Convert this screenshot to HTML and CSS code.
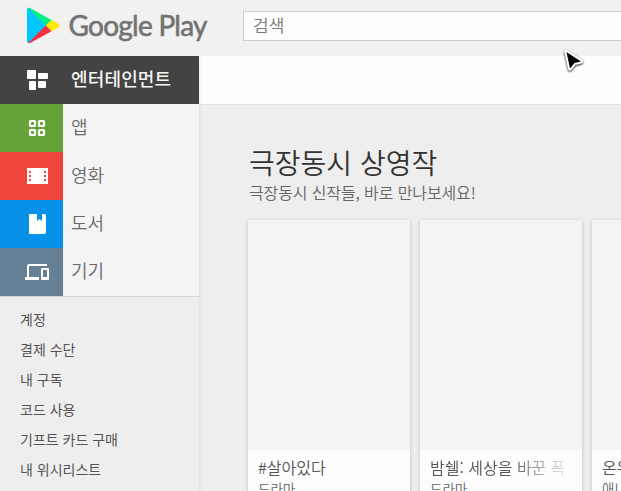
FILE: index.html
```html
<!DOCTYPE html>
<html lang="ko">
<head>
    <meta charset="UTF-8">
    <meta name="viewport" content="width=device-width, initial-scale=1.0">
    <title>Google Play</title>
    <link rel="stylesheet" href="styles.css">
</head>
<body>
    <header class="header">
        <a class="logo">
            <svg width="190" height="56" viewBox="0 0 190 56">
                <path fill="#00c8ff" d="M27 9.5 Q27 7.5 29 7.8 L47 25.5 L29.5 43 Q27 43.5 27 41.5z"/>
                <path fill="#00ee84" d="M28 8 Q29 7.4 30.5 8.2 L51.5 20 L46 25.8z"/>
                <path fill="#ffe900" d="M51.5 20 L58.5 24 Q60.5 25.6 58.5 27.2 L51.5 31.2 L45.8 25.5z"/>
                <path fill="#f5313f" d="M45.8 25.5 L51.5 31.2 L30.5 42.8 Q29 43.7 28 43z"/>
                <text class="logo-text" x="68.5" y="35.5" textLength="139">Google Play</text>
            </svg>
        </a>
        <input class="search" type="text" placeholder="검색">
    </header>

    <div class="page">
        <aside class="sidebar">
            <nav class="nav">
                <a class="nav-item active">
                    <span class="nav-icon">
                        <svg width="24" height="24" viewBox="0 0 24 24" fill="#fff">
                            <rect x="2" y="2" width="9" height="9" rx="1"/>
                            <rect x="13" y="5" width="10" height="6" rx="1"/>
                            <rect x="4" y="13" width="7" height="9" rx="1"/>
                            <rect x="13" y="13" width="8" height="7" rx="1"/>
                        </svg>
                    </span>
                    <span class="nav-label">엔터테인먼트</span>
                </a>
                <a class="nav-item apps">
                    <span class="nav-icon">
                        <svg width="24" height="24" viewBox="0 0 24 24" fill="none" stroke="#fff" stroke-width="2.2">
                            <rect x="5" y="5" width="5" height="5" rx=".5"/>
                            <rect x="14" y="5" width="5" height="5" rx=".5"/>
                            <rect x="5" y="14" width="5" height="5" rx=".5"/>
                            <rect x="14" y="14" width="5" height="5" rx=".5"/>
                        </svg>
                    </span>
                    <span class="nav-label">앱</span>
                </a>
                <a class="nav-item movies">
                    <span class="nav-icon">
                        <svg width="24" height="24" viewBox="0 0 24 24">
                            <rect x="2" y="4" width="21" height="16" fill="#fff"/>
                            <path stroke="#ef453c" stroke-width="2" stroke-dasharray="2 2" d="M5 7v12M20 7v12"/>
                        </svg>
                    </span>
                    <span class="nav-label">영화</span>
                </a>
                <a class="nav-item books">
                    <span class="nav-icon">
                        <svg width="24" height="24" viewBox="0 0 24 24" fill="#fff">
                            <path d="M5 2h7v7l2.5-2 2.5 2V2h2q2 0 2 2v16q0 2-2 2H5q-1 0-1-1V3q0-1 1-1z"/>
                        </svg>
                    </span>
                    <span class="nav-label">도서</span>
                </a>
                <a class="nav-item devices">
                    <span class="nav-icon">
                        <svg width="26" height="24" viewBox="0 0 26 24" fill="#fff">
                            <path d="M5 6h18V4H5q-2 0-2 2v11H1v3h14v-3H5zM24 8h-6q-1 0-1 1v10q0 1 1 1h6q1 0 1-1V9q0-1-1-1zm-1 9h-4v-7h4z"/>
                        </svg>
                    </span>
                    <span class="nav-label">기기</span>
                </a>
            </nav>
            <ul class="links">
                <li>계정</li>
                <li>결제 수단</li>
                <li>내 구독</li>
                <li>코드 사용</li>
                <li>기프트 카드 구매</li>
                <li>내 위시리스트</li>
            </ul>
        </aside>

        <main class="main">
            <div class="toolbar"></div>
            <section class="cluster">
                <h1 class="title">극장동시 상영작</h1>
                <p class="subtitle">극장동시 신작들, 바로 만나보세요!</p>
                <div class="cards">
                    <div class="card">
                        <div class="cover"></div>
                        <div class="card-title">#살아있다</div>
                        <div class="card-genre">드라마</div>
                    </div>
                    <div class="card">
                        <div class="cover"></div>
                        <div class="card-title fade">밤쉘: 세상을 바꾼 폭</div>
                        <div class="card-genre">드라마</div>
                    </div>
                    <div class="card">
                        <div class="cover"></div>
                        <div class="card-title">온워드</div>
                        <div class="card-genre">애니메이션</div>
                    </div>
                </div>
            </section>
        </main>
    </div>

    <svg class="cursor" width="28" height="30" viewBox="0 0 28 30">
        <path fill="#000" stroke="#fff" stroke-width="4" stroke-linejoin="round" paint-order="stroke" d="M6.5 6 L21 15.5 L14.5 17 L10 22.5z"/>
    </svg>
</body>
</html>
```

FILE: styles.css
```css
* {
    box-sizing: border-box;
}
body {
    margin: 0;
    height: 491px;
    overflow: hidden;
    background-color: #eee;
    font-family: "Noto Sans CJK KR", sans-serif;
    color: #333;
}
.header {
    display: flex;
    height: 56px;
    overflow: hidden;
    background-color: #f1f1f1;
}
.logo {
    flex: none;
    width: 243px;
}
.logo svg {
    display: block;
    overflow: visible;
}
.logo-text {
    font-family: Lato, sans-serif;
    font-size: 28px;
    fill: #737373;
    stroke: #737373;
    stroke-width: .6px;
}
.search {
    flex: none;
    width: 480px;
    height: 30px;
    margin-top: 11px;
    padding: 0 9px 3px;
    border: 1px solid #ccc;
    border-radius: 0;
    background-color: #fdfdfd;
    font-family: "Noto Sans CJK KR", sans-serif;
    font-size: 17px;
    font-weight: 350;
}
.search::placeholder {
    color: #777;
}
.page {
    display: flex;
    height: 435px;
    overflow: hidden;
}
.sidebar {
    flex: none;
    width: 199px;
    box-shadow: 1px 0 3px rgba(0, 0, 0, .06);
    z-index: 1;
}
.nav {
    border-bottom: 1px solid #d5d5d5;
    background-color: #f4f4f4;
}
.nav-item {
    display: flex;
    align-items: center;
    height: 48px;
    font-size: 18px;
    font-weight: 350;
    color: #6a6a6a;
}
.nav-icon {
    display: flex;
    align-items: center;
    justify-content: center;
    flex: none;
    width: 63px;
    height: 48px;
    padding-left: 11px;
    padding-right: 1px;
}
.nav-label {
    padding: 0 0 4px 8px;
}
.active {
    background-color: #434343;
    color: #f4f4f4;
    font-weight: 500;
    letter-spacing: .15px;
}
.apps .nav-icon {
    background-color: #65a33a;
}
.movies .nav-icon {
    background-color: #ef453c;
}
.books .nav-icon {
    background-color: #0791e8;
}
.devices .nav-icon {
    background-color: #658094;
}
.links {
    margin: 0;
    padding: 7px 0 0 20px;
    list-style: none;
    font-size: 14px;
    line-height: 30px;
    color: #555;
}
.main {
    flex: 1;
    min-width: 0;
}
.toolbar {
    height: 49px;
    border-bottom: 1px solid #e0e0e0;
    background-color: #fdfdfd;
}
.cluster {
    padding: 37px 0 0 49px;
}
.title {
    margin: 0 0 0 1px;
    font-size: 28px;
    font-weight: 350;
    line-height: 40px;
}
.subtitle {
    margin: 0 0 0 1px;
    font-size: 16px;
    font-weight: 350;
    line-height: 20px;
    letter-spacing: -.12px;
    color: #666;
}
.cards {
    display: flex;
    gap: 10px;
    margin-top: 18px;
}
.card {
    flex: none;
    width: 162px;
    height: 300px;
    background-color: #fdfdfd;
    box-shadow: 0 1px 4px rgba(0, 0, 0, .2);
}
.cover {
    height: 230px;
    background-color: #f4f4f4;
}
.card-title {
    padding: 5px 10px 0;
    font-size: 16px;
    font-weight: 350;
    line-height: 24px;
    white-space: nowrap;
    overflow: hidden;
    color: #555;
}
.fade {
    -webkit-mask-image: linear-gradient(to right, #000 55%, transparent 95%);
    mask-image: linear-gradient(to right, #000 55%, transparent 95%);
}
.card-genre {
    padding: 0 10px;
    font-size: 13.5px;
    font-weight: 350;
    line-height: 19px;
    color: #666;
}
.cursor {
    position: absolute;
    left: 560px;
    top: 46px;
    filter: drop-shadow(0 1px 1px rgba(0, 0, 0, .9));
}
```
